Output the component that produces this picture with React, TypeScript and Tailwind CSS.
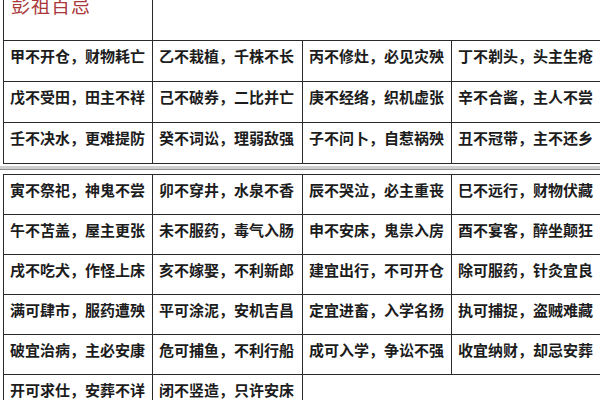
const table1 = [
  ["甲不开仓，财物耗亡", "乙不栽植，千株不长", "丙不修灶，必见灾殃", "丁不剃头，头主生疮"],
  ["戊不受田，田主不祥", "己不破券，二比并亡", "庚不经络，织机虚张", "辛不合酱，主人不尝"],
  ["壬不决水，更难提防", "癸不词讼，理弱敌强", "子不问卜，自惹祸殃", "丑不冠带，主不还乡"],
];

const table2 = [
  ["寅不祭祀，神鬼不尝", "卯不穿井，水泉不香", "辰不哭泣，必主重丧", "巳不远行，财物伏藏"],
  ["午不苫盖，屋主更张", "未不服药，毒气入肠", "申不安床，鬼祟入房", "酉不宴客，醉坐颠狂"],
  ["戌不吃犬，作怪上床", "亥不嫁娶，不利新郎", "建宜出行，不可开仓", "除可服药，针灸宜良"],
  ["满可肆市，服药遭殃", "平可涂泥，安机吉昌", "定宜进畜，入学名扬", "执可捕捉，盗贼难藏"],
  ["破宜治病，主必安康", "危可捕鱼，不利行船", "成可入学，争讼不强", "收宜纳财，却忌安葬"],
];

const cols = "grid grid-cols-[149px_150px_149px_150px]";
const cell =
  "h-[40px] border-r border-b border-[#2a2a2a] pl-[6px] pt-[5px] text-[15px] leading-[20px] text-[#1c1c1c] font-semibold whitespace-nowrap overflow-hidden";

export default function App() {
  return (
    <div
      className="w-[600px] h-[400px] overflow-hidden bg-white"
      style={{ fontFamily: '"Noto Sans CJK SC", "Noto Sans", sans-serif' }}
    >
      {/* 上表 */}
      <div className={`${cols} ml-[3px] w-[598px] border-l border-[#2a2a2a]`}>
        <div className="h-[41px] border-r border-b border-[#2a2a2a] pl-[7px] overflow-hidden">
          <div className="-mt-[6px] text-[19px] leading-[22px] tracking-[1px] text-[#a8383c]">彭祖百忌</div>
        </div>
        <div className="h-[41px] border-b border-[#2a2a2a]" />
        <div className="h-[41px] border-b border-[#2a2a2a]" />
        <div className="h-[41px] border-b border-[#2a2a2a]" />
        {table1.flat().map((t, i) => (
          <div key={i} className={cell + " h-[41px]"}>
            {t}
          </div>
        ))}
      </div>

      {/* 分隔 */}
      <div className="h-[10px] flex flex-col">
        <div className="h-[2px]" />
        <div className="h-[4px] bg-[#cfcfcf] border-b border-[#8f8f8f]" />
        <div className="flex-1" />
      </div>

      {/* 下表 */}
      <div className={`${cols} ml-[3px] w-[598px] border-l border-t border-[#2a2a2a]`}>
        {table2.flat().map((t, i) => (
          <div key={i} className={cell}>
            {t}
          </div>
        ))}
        <div className={cell}>开可求仕，安葬不详</div>
        <div className={cell}>闭不竖造，只许安床</div>
        <div className="h-[40px]" />
        <div className="h-[40px]" />
      </div>
    </div>
  );
}
